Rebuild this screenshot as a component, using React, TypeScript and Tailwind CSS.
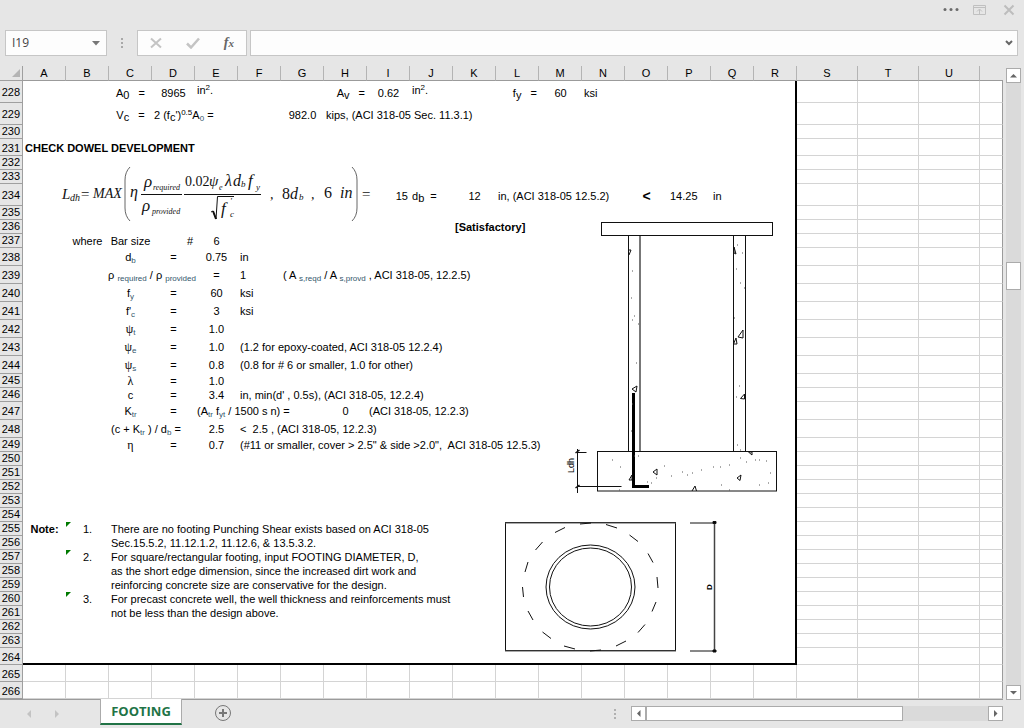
import type { ReactNode } from "react";
import clsx from "clsx";

type Align = "l" | "c" | "r";

type Cell = {
  text: ReactNode;
  align?: Align;
  bold?: boolean;
  top?: boolean;
  span?: number;
  flag?: boolean;
};

type Row = {
  n: number;
  h: number;
  cells?: Record<string, Cell>;
};

const COLS = "ABCDEFGHIJKLMNOPQRSTU".split("");

const left = (text: ReactNode, extra: Partial<Cell> = {}): Cell => ({ text, align: "l", ...extra });
const mid = (text: ReactNode, extra: Partial<Cell> = {}): Cell => ({ text, align: "c", ...extra });
const right = (text: ReactNode, extra: Partial<Cell> = {}): Cell => ({ text, align: "r", ...extra });

function Sub({ children }: { children: ReactNode }) {
  return <sub className="text-[8px] text-[#33566b]">{children}</sub>;
}

function BigSub({ children }: { children: ReactNode }) {
  return <sub className="bottom-[-2px] text-[11px]">{children}</sub>;
}

function Sup({ children }: { children: ReactNode }) {
  return <sup className="text-[8px]">{children}</sup>;
}

function Greek({ children }: { children: ReactNode }) {
  return <span className="font-['Liberation_Serif',serif] text-[12px]">{children}</span>;
}

const ROWS: Row[] = [
  {
    n: 228,
    h: 22,
    cells: {
      C: mid(<>A<BigSub>0</BigSub>{"   ="}</>),
      D: mid("8965"),
      E: left(<>in<Sup>2</Sup>.</>, { top: true }),
      H: right(<>A<BigSub>v</BigSub>{"   ="}</>),
      I: mid("0.62"),
      J: left(<>in<Sup>2</Sup>.</>, { top: true }),
      L: right(<>f<BigSub>y</BigSub>{"   ="}</>),
      M: mid("60"),
      N: left("ksi"),
    },
  },
  {
    n: 229,
    h: 22,
    cells: {
      C: mid(<>V<BigSub>c</BigSub>{"   ="}</>),
      D: left(<>2 (f<BigSub>c</BigSub>')<Sup>0.5</Sup>A<Sub>0</Sub> =</>),
      G: mid("982.0"),
      H: left("kips, (ACI 318-05 Sec. 11.3.1)"),
    },
  },
  { n: 230, h: 14 },
  { n: 231, h: 17, cells: { A: left("CHECK DOWEL DEVELOPMENT", { bold: true }) } },
  { n: 232, h: 14 },
  { n: 233, h: 14 },
  {
    n: 234,
    h: 22,
    cells: {
      I: right("15"),
      J: left(<>d<BigSub>b</BigSub>{"  ="}</>),
      K: mid("12"),
      L: left("in, (ACI 318-05 12.5.2)"),
      O: mid(<span className="text-[14px]">&lt;</span>, { bold: true }),
      P: left("14.25"),
      Q: left("in"),
    },
  },
  { n: 235, h: 14 },
  { n: 236, h: 14, cells: { K: left("[Satisfactory]", { bold: true }) } },
  { n: 237, h: 14, cells: { B: mid("where"), C: mid("Bar size"), D: right("#"), E: mid("6") } },
  { n: 238, h: 18, cells: { C: mid(<>d<Sub>b</Sub></>), D: mid("="), E: mid("0.75"), F: left("in") } },
  {
    n: 239,
    h: 18,
    cells: {
      C: mid(<>ρ <Sub>required</Sub> / ρ <Sub>provided</Sub></>, { span: 2 }),
      E: mid("="),
      F: left("1"),
      G: left(<>( A <Sub>s,reqd</Sub> / A <Sub>s,provd</Sub> , ACI 318-05, 12.2.5)</>),
    },
  },
  { n: 240, h: 18, cells: { C: mid(<>f<Sub>y</Sub></>), D: mid("="), E: mid("60"), F: left("ksi") } },
  { n: 241, h: 18, cells: { C: mid(<>f'<Sub>c</Sub></>), D: mid("="), E: mid("3"), F: left("ksi") } },
  { n: 242, h: 18, cells: { C: mid(<><Greek>ψ</Greek><Sub>t</Sub></>), D: mid("="), E: mid("1.0") } },
  {
    n: 243,
    h: 18,
    cells: {
      C: mid(<><Greek>ψ</Greek><Sub>e</Sub></>),
      D: mid("="),
      E: mid("1.0"),
      F: left("(1.2 for epoxy-coated, ACI 318-05 12.2.4)"),
    },
  },
  {
    n: 244,
    h: 18,
    cells: {
      C: mid(<><Greek>ψ</Greek><Sub>s</Sub></>),
      D: mid("="),
      E: mid("0.8"),
      F: left("(0.8 for # 6 or smaller, 1.0 for other)"),
    },
  },
  { n: 245, h: 14, cells: { C: mid(<Greek>λ</Greek>), D: mid("="), E: mid("1.0") } },
  {
    n: 246,
    h: 14,
    cells: { C: mid("c"), D: mid("="), E: mid("3.4"), F: left("in, min(d' , 0.5s), (ACI 318-05, 12.2.4)") },
  },
  {
    n: 247,
    h: 18,
    cells: {
      C: mid(<>K<Sub>tr</Sub></>),
      D: mid("="),
      E: left(<>(A<Sub>tr</Sub> f<Sub>yt</Sub> / 1500 s n) =</>),
      H: mid("0"),
      I: left("(ACI 318-05, 12.2.3)"),
    },
  },
  {
    n: 248,
    h: 18,
    cells: {
      C: left(<>(c + K<Sub>tr</Sub> ) / d<Sub>b</Sub> =</>),
      E: mid("2.5"),
      F: left("<  2.5 , (ACI 318-05, 12.2.3)"),
    },
  },
  {
    n: 249,
    h: 14,
    cells: {
      C: mid(<Greek>η</Greek>),
      D: mid("="),
      E: mid("0.7"),
      F: left("(#11 or smaller, cover > 2.5\" & side >2.0\",  ACI 318-05 12.5.3)"),
    },
  },
  { n: 250, h: 14 },
  { n: 251, h: 14 },
  { n: 252, h: 14 },
  { n: 253, h: 14 },
  { n: 254, h: 14 },
  {
    n: 255,
    h: 14,
    cells: {
      A: mid("Note:", { bold: true }),
      B: mid("1.", { flag: true }),
      C: left("There are no footing Punching Shear exists based on ACI 318-05"),
    },
  },
  { n: 256, h: 14, cells: { C: left("Sec.15.5.2, 11.12.1.2, 11.12.6, & 13.5.3.2.") } },
  {
    n: 257,
    h: 14,
    cells: { B: mid("2.", { flag: true }), C: left("For square/rectangular footing, input FOOTING DIAMETER, D,") },
  },
  { n: 258, h: 14, cells: { C: left("as the short edge dimension, since the increased dirt work and") } },
  { n: 259, h: 14, cells: { C: left("reinforcing concrete size are conservative for the design.") } },
  {
    n: 260,
    h: 14,
    cells: {
      B: mid("3.", { flag: true }),
      C: left("For precast concrete well, the well thickness and reinforcements must"),
    },
  },
  { n: 261, h: 14, cells: { C: left("not be less than the design above.") } },
  { n: 262, h: 14 },
  { n: 263, h: 14 },
  { n: 264, h: 17 },
  { n: 265, h: 17 },
  { n: 266, h: 17 },
];

function SheetRow({ row }: { row: Row }) {
  const inPrint = row.n <= 264;
  const tds: ReactNode[] = [];

  for (let i = 0; i < COLS.length; i++) {
    const cell = row.cells?.[COLS[i]];
    const printed = inPrint && i < 18;
    tds.push(
      <td
        key={COLS[i]}
        colSpan={cell?.span}
        className={clsx(
          "p-0",
          cell?.top ? "align-top" : "align-middle",
          cell?.flag && "relative",
          row.h === 22 && "pt-0.5",
          !printed && "border-r border-b border-[#d4d4d4]",
          printed && i === 17 && "border-r-2 border-r-black",
          printed && row.n === 264 && "border-b-2 border-b-black"
        )}
      >
        {cell?.flag && (
          <svg className="absolute top-0 left-0" width="6" height="6" viewBox="0 0 6 6" aria-hidden="true">
            <path d="M0 0h5L0 5z" fill="#007a00" />
          </svg>
        )}
        {cell && (
          <div
            className={clsx(
              "flex px-0.5 whitespace-pre leading-[14px]",
              cell.align === "c" && "justify-center",
              cell.align === "r" && "justify-end",
              cell.bold && "font-bold"
            )}
          >
            <span>{cell.text}</span>
          </div>
        )}
      </td>
    );
    if (cell?.span) i += cell.span - 1;
  }

  return (
    <tr style={{ height: row.h }}>
      <th
        scope="row"
        className={clsx(
          "border-r border-b border-[#9f9f9f] bg-[#e6e6e6] p-0 pr-0.5 text-right align-middle leading-[13px] font-normal",
          row.h > 14 && "pt-0.5"
        )}
      >
        {row.n}
      </th>
      {tds}
      <td className="border-r border-b border-r-[#9b9b9b] border-b-[#d4d4d4] p-0" />
    </tr>
  );
}

function Equation() {
  return (
    <svg
      className="absolute top-[94px] left-[56px] font-['Liberation_Serif',serif] italic"
      width="320"
      height="66"
      viewBox="56 160 320 66"
      fill="#111"
      fontSize="14"
    >
      <text x="62" y="199" fontSize="15">L</text>
      <text x="70" y="201" fontSize="10">dh</text>
      <text x="80" y="199" fontSize="15">=</text>
      <text x="93" y="198">MAX</text>
      <text x="130" y="197" fontSize="16">η</text>
      <text x="144" y="187" fontSize="17">ρ</text>
      <text x="153" y="190" fontSize="8">required</text>
      <text x="142" y="211" fontSize="17">ρ</text>
      <text x="152" y="214" fontSize="8">provided</text>
      <text x="185" y="186" fontStyle="normal">0.02</text>
      <text x="209" y="186" fontSize="15">ψ</text>
      <text x="219" y="190" fontSize="8">e</text>
      <text x="225" y="186" fontSize="16">λ</text>
      <text x="233" y="186" fontSize="16">d</text>
      <text x="241" y="187" fontSize="9">b</text>
      <text x="248" y="186" fontSize="17">f</text>
      <text x="256" y="190" fontSize="9">y</text>
      <text x="221" y="214" fontSize="17">f</text>
      <text x="230" y="204" fontSize="9">'</text>
      <text x="230" y="217" fontSize="9">c</text>
      <text x="270" y="199">,</text>
      <text x="282" y="199" fontStyle="normal" fontSize="16">8</text>
      <text x="290" y="199" fontSize="16">d</text>
      <text x="299" y="200" fontSize="9">b</text>
      <text x="311" y="199">,</text>
      <text x="324" y="198" fontStyle="normal" fontSize="16">6</text>
      <text x="340" y="198" fontSize="16">in</text>
      <text x="361" y="199" fontSize="15">=</text>
      <g fill="none" stroke="#111" strokeWidth="1">
        <path d="M141 194.500h41M184 194.500h77" />
        <path d="M211 212l2-1 3 8 1.500-22.500h16.500" />
        <path d="M213 211l3 8" strokeWidth="2" />
        <path d="M130 167q-5 5-5 13v28q0 8 5 13M352 167q5 5 5 13v28q0 8-5 13" stroke="#666" />
      </g>
    </svg>
  );
}

function WellSection() {
  return (
    <svg
      className="absolute top-[148px] left-[560px]"
      width="228"
      height="286"
      viewBox="560 214 228 286"
      fill="none"
      stroke="#111"
      strokeWidth="1"
    >
      <rect x="601.5" y="222.500" width="171" height="13" />
      <path d="M628.500 236v215M733.500 236v215M745.500 236v215" />
      <path d="M640 236v215" stroke="#777" strokeWidth="2" />
      <rect x="597.5" y="451.500" width="179" height="39.500" />
      <path d="M633.500 393v93.500M632 486.500h17" stroke="#000" strokeWidth="3" />
      <path d="M577.500 449v44M577.500 452.500h9M577.500 486.500h44" />
      <path d="M575.500 453l4-3M575.500 488l4-3" strokeWidth="1.500" />
      <path d="M628 250h3l-2 5M734 253v-6l2 7zM738 337l5-7v8zM733.500 344l2.500-6 1 6zM632 389l5-3-1 6zM740.500 398.500l4-4.500v5zM653 472l4-3v6zM629 480l3-5v5zM737 478l4-3-1 5.500zM692 491l3-5 1.500 5M748.500 452l3.500 0v3z" />
      <path
        stroke="#555"
        strokeDasharray="1 3"
        d="M632 271h1M631 298h1M634 316h1M632 320h1M638 324h1M636 363h1M632 404h1M631 431h1M737 245h1M742 253h1M736 269h1M740 283h1M744 288h2M734 318h1M739 386h1M736 397h1M737 445h1M740 450h1M612 460h4M620 467h1M634 456h8M651 483h1M656 478h1M671 476h1M682 472h1M687 475h1M692 473h1M701 470h2M720 467h1M729 465h2M740 458h1M746 462h1M755 460h8M766 461h1M770 473h1M768 483h1M759 485h1M721 485h1M713 467h1M664 466h1M619 490h1M729 490h1M647 482h1"
      />
      <text
        x="574"
        y="473"
        transform="rotate(-90 574 473)"
        fontSize="9"
        fill="#000"
        stroke="none"
        className="font-['Liberation_Sans',sans-serif]"
      >
        Ldh
      </text>
    </svg>
  );
}

function WellPlan() {
  return (
    <svg
      className="absolute top-[450px] left-[500px]"
      width="226"
      height="142"
      viewBox="500 516 226 142"
      fill="none"
      stroke="#111"
      strokeWidth="1"
    >
      <rect x="505.5" y="522.500" width="170" height="128" />
      <path d="M505 523h171M505 651h171" stroke="#555" strokeWidth="1" />
      <ellipse cx="590.5" cy="587" rx="44.500" ry="42" />
      <ellipse cx="590.5" cy="587" rx="41" ry="39" />
      <path d="M580 524l11-1M606 524.500l11 3.500M629.500 535l8.500 6.500M648 553.500l5 9M657 577l1 11M656 602l-4 9.500M645 624.500l-7 8M626 641l-10 5M601 650l-11 1M575 649l-11-3M551 638.500l-8.500-6.500M533 620l-5-9M523.500 597l-1-10M525 572l3-10M535.500 550l7-8M555 532.500l10-5" />
      <path d="M690 523h24.500M690 651h24.500" />
      <path d="M714.500 522v130" stroke="#444" strokeWidth="1.500" />
      <path d="M713 521.500h3v2h-3zM713 650h3v2h-3z" fill="#000" />
      <text
        x="712"
        y="590"
        transform="rotate(-90 712 590)"
        fontSize="8"
        fontWeight="bold"
        fill="#000"
        stroke="none"
        className="font-['Liberation_Sans',sans-serif]"
      >
        D
      </text>
    </svg>
  );
}

function TitleBar() {
  return (
    <header className="flex h-[30px] items-start justify-end gap-3 pt-1 pr-[9px]">
      <button type="button" aria-label="More" className="flex h-3 items-center">
        <svg width="16" height="12" viewBox="0 0 16 12" fill="#6a6a6a">
          <circle cx="2" cy="5.500" r="1.500" />
          <circle cx="8" cy="5.500" r="1.500" />
          <circle cx="14" cy="5.500" r="1.500" />
        </svg>
      </button>
      <button type="button" aria-label="Ribbon display options" className="ml-0.5">
        <svg width="14" height="12" viewBox="0 0 14 12" fill="none" stroke="#c0c0c0">
          <path d="M.5 1.500h12v9H.5zM.5 3.500h12M6.500 10V5.500M4 7.500l2.500-2.500L9 7.500" />
        </svg>
      </button>
      <button type="button" aria-label="Close" className="ml-1">
        <svg width="12" height="12" viewBox="0 0 12 12" fill="none" stroke="#bdbdbd" strokeWidth="2">
          <path d="M1.500 1.500l9 9M10.500 1.500l-9 9" />
        </svg>
      </button>
    </header>
  );
}

function FormulaBar() {
  return (
    <div className="flex h-[26px] items-stretch pr-1.5 pl-[5px]">
      <div className="flex w-[102px] items-center border border-[#c6c6c6] bg-[#fdfdfd]">
        <input
          aria-label="Name box"
          defaultValue="I19"
          className="w-20 bg-transparent pl-1.5 font-['Open_Sans',sans-serif] text-xs text-[#444] outline-none"
        />
        <button type="button" aria-label="Open name list" className="ml-0.5 p-1">
          <svg width="8" height="5" viewBox="0 0 8 5" fill="#777">
            <path d="M0 0h8L4 4.500z" />
          </svg>
        </button>
      </div>
      <div className="flex w-[30px] items-center justify-center">
        <svg width="2" height="10" viewBox="0 0 2 10" fill="#a8a8a8">
          <path d="M0 0h2v2H0zM0 4h2v2H0zM0 8h2v2H0z" />
        </svg>
      </div>
      <div className="flex w-[110px] items-center justify-between border border-[#c6c6c6] bg-[#fdfdfd] px-3">
        <button type="button" aria-label="Cancel">
          <svg width="12" height="12" viewBox="0 0 12 12" fill="none" stroke="#c4c4c4" strokeWidth="2">
            <path d="M1 1.500l10 9M11 1.500l-10 9" />
          </svg>
        </button>
        <button type="button" aria-label="Enter">
          <svg width="14" height="12" viewBox="0 0 14 12" fill="none" stroke="#c4c4c4" strokeWidth="2.500">
            <path d="M1 6.500l4 4 8-9" />
          </svg>
        </button>
        <button
          type="button"
          aria-label="Insert function"
          className="font-['Liberation_Serif',serif] text-sm leading-none font-bold text-[#666] italic"
        >
          f<span className="text-[11px]">x</span>
        </button>
      </div>
      <div className="ml-[3px] flex flex-1 items-center border border-[#c6c6c6] bg-[#fdfdfd] pr-1">
        <input aria-label="Formula" className="min-w-0 flex-1 bg-transparent px-1 text-xs outline-none" />
        <button type="button" aria-label="Expand formula bar">
          <svg width="8" height="6" viewBox="0 0 8 6" fill="none" stroke="#666" strokeWidth="2">
            <path d="M1 1l3 3 3-3" />
          </svg>
        </button>
      </div>
    </div>
  );
}

function ScrollButton({ label, d }: { label: string; d: string }) {
  return (
    <button
      type="button"
      aria-label={label}
      className="flex size-[15px] shrink-0 items-center justify-center border border-[#ababab] bg-white"
    >
      <svg width="9" height="9" viewBox="0 0 9 9" fill="#666">
        <path d={d} />
      </svg>
    </button>
  );
}

function VerticalScroll() {
  return (
    <div className="ml-[3px] mr-[3px] flex w-[15px] flex-col pt-0.5">
      <ScrollButton label="Scroll up" d="M1 6.500h7L4.500 3z" />
      <div className="flex flex-1 flex-col bg-[#dadada]">
        <div className="flex-[179]" />
        <div className="h-7 border border-[#ababab] bg-white" />
        <div className="flex-[395]" />
      </div>
      <ScrollButton label="Scroll down" d="M1 3h7L4.500 6.500z" />
    </div>
  );
}

function SheetTabs() {
  return (
    <footer className="flex h-[28px] items-start">
      <div className="flex w-[100px] items-center gap-5 pt-2.5 pl-[26px]">
        <button type="button" aria-label="Previous sheet">
          <svg width="6" height="8" viewBox="0 0 6 8" fill="#c3c3c3">
            <path d="M5 0v8L1 4z" />
          </svg>
        </button>
        <button type="button" aria-label="Next sheet" className="ml-0.5">
          <svg width="6" height="8" viewBox="0 0 6 8" fill="#c3c3c3">
            <path d="M1 0v8l4-4z" />
          </svg>
        </button>
      </div>
      <button
        type="button"
        className="relative z-10 -mt-px h-[26px] w-[82px] border-x border-b-2 border-x-[#ababab] border-b-[#217346] bg-white font-['Open_Sans',sans-serif] text-[13px] leading-6 font-bold text-[#217346]"
      >
        FOOTING
      </button>
      <button type="button" aria-label="New sheet" className="mt-1 ml-8">
        <svg width="18" height="18" viewBox="0 0 18 18" fill="none" stroke="#777">
          <circle cx="9" cy="9" r="7.500" />
          <path d="M5 9h8M9 5v8" strokeWidth="2" />
        </svg>
      </button>
      <div className="mt-1.5 mr-[21px] ml-auto flex h-[15px] items-center">
        <svg className="mr-[15px]" width="2" height="10" viewBox="0 0 2 10" fill="#b0b0b0">
          <path d="M0 0h2v2H0zM0 4h2v2H0zM0 8h2v2H0z" />
        </svg>
        <ScrollButton label="Scroll left" d="M6.500 1v7L3 4.500z" />
        <div className="flex h-[15px] w-[342px] bg-[#dadada]">
          <div className="w-3/4 border border-[#ababab] bg-white" />
        </div>
        <ScrollButton label="Scroll right" d="M3 1v7l3.500-3.500z" />
      </div>
    </footer>
  );
}

export default function App() {
  return (
    <div className="flex min-h-screen flex-col overflow-hidden bg-[#e6e6e6] font-['Liberation_Sans',Arial,sans-serif] text-[11px] text-black">
      <TitleBar />
      <FormulaBar />
      <main className="mt-2.5 flex">
        <div className="relative min-w-0 flex-1 overflow-hidden border-b border-[#9b9b9b]">
          <table className="w-full table-fixed border-separate border-spacing-0 bg-white">
            <colgroup>
              <col className="w-[23px]" />
              {COLS.map((c, i) => (
                <col key={c} className={i < 18 ? "w-[43px]" : "w-[61px]"} />
              ))}
              <col />
            </colgroup>
            <thead>
              <tr className="h-[15px] bg-[#e6e6e6]">
                <th className="border-r border-b border-[#9f9f9f] p-0" aria-label="Select all">
                  <svg className="ml-3" width="8" height="8" viewBox="0 0 8 8" fill="#b4b4b4">
                    <path d="M8 0v8H0z" />
                  </svg>
                </th>
                {COLS.map((c) => (
                  <th
                    key={c}
                    scope="col"
                    className="border-r border-b border-r-[#b4b4b4] border-b-[#9b9b9b] p-0 leading-[14px] font-normal"
                  >
                    {c}
                  </th>
                ))}
                <th className="border-b border-[#9b9b9b] p-0" />
              </tr>
            </thead>
            <tbody>
              {ROWS.map((row) => (
                <SheetRow key={row.n} row={row} />
              ))}
            </tbody>
          </table>
          <Equation />
          <WellSection />
          <WellPlan />
        </div>
        <VerticalScroll />
      </main>
      <SheetTabs />
    </div>
  );
}
